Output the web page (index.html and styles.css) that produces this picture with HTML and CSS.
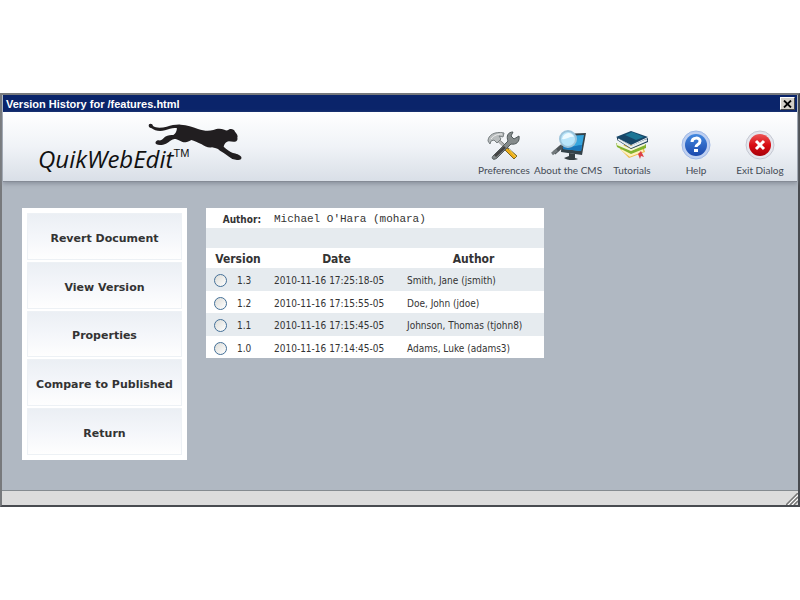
FILE: index.html
```html
<!DOCTYPE html>
<html lang="en">
<head>
<meta charset="utf-8">
<title>Version History for /features.html</title>
<link rel="stylesheet" href="styles.css">
</head>
<body>
<main class="window">
  <div class="titlebar">
    <h1 class="title">Version History for /features.html</h1>
    <button class="close" type="button" aria-label="Close">
      <svg width="9" height="8" viewBox="0 0 9 8"><path d="M1 .5 8 7.5M8 .5 1 7.5" stroke="#000" stroke-width="1.8"/></svg>
    </button>
  </div>
  <header class="header">
    <div class="brand">
      <span class="name">QuikWebEdit</span><span class="tm">TM</span>
      <svg class="panther" width="110" height="50" viewBox="0 0 330 150" aria-hidden="true">
        <path fill="#211e20" d="M27 19C32 15 38 18 39 24C48 31 65 30 80 26C95 22 109 19 122 20C142 20 157 27 174 33C191 39 207 40 220 36C233 31 243 32 253 35C258 38 264 38 268 34C274 31 283 34 285 41C290 47 295 53 292 59C294 64 291 70 285 71C275 73 267 67 260 72C254 76 252 81 251 86C260 95 270 101 279 105C288 107 300 110 304 117C306 124 301 127 291 126L277 123C263 113 252 105 240 98C232 90 224 91 216 88C204 90 195 86 185 79C173 74 163 68 154 66C147 70 139 73 131 73C122 71 115 63 103 63C93 64 87 73 78 77C68 81 57 83 48 78C44 73 49 67 56 67C63 68 66 65 72 59C79 52 89 50 100 51C107 48 110 39 111 31C99 28 88 34 75 37C59 41 43 38 35 31C28 30 24 25 27 19Z"/>
      </svg>
    </div>
    <nav class="tools">
      <a class="tool" href="#preferences">
        <svg width="34" height="32" viewBox="0 0 34 32" aria-hidden="true">
          <path d="M10 10 28 27" stroke="#666" stroke-width="3"/>
          <path d="M10 10 18 18" stroke="#b9bcbc" stroke-width="2"/>
          <path d="m19 18 11 9-3 3-10-10z" fill="#edad19" stroke="#77662b"/>
          <path d="m22 20 7 8" stroke="#ffdc54"/>
          <path d="M1 12c0-6 7-10 16-8l-1 4-4-1 2 3-4 4-3-3-3 1-1 3z" fill="#b9bdbe" stroke="#777e80"/>
          <path d="m6 27 15-15c-2-5 0-9 5-9l-2 4 3 3 5-3c1 6-3 9-8 8L10 29c-4 3-6 0-4-2z" fill="#858b8c" stroke="#50595a"/>
          <path d="m8 27 10-9" stroke="#444" stroke-width="3"/><path d="M4 10c3-4 7-5 11-5" fill="none" stroke="#eee"/>
        </svg>
        <span>Preferences</span>
      </a>
      <a class="tool" href="#about">
        <svg width="36" height="32" viewBox="0 0 36 32" aria-hidden="true">
          <path d="m12 5 24-1-4 22-21-3z" fill="#344249"/>
          <path d="m14 7 20-1-3 16-18-2z" fill="#36a5dd"/>
          <path d="m13 16c7 4 12 0 19 0l-1 6-18-2z" fill="#1976ba"/>
          <path d="m19 24 6 1v4l3 1c-4 2-12 1-14-1l5-2z" fill="#353e42"/>
          <path d="m12 17-8 7" stroke="#4c5357" stroke-width="4"/><path d="m7 21-5 4" stroke="#737a7d" stroke-width="3"/>
          <circle cx="18" cy="10" r="8" fill="#b9e5fa" stroke="#9cc3da" stroke-width="2"/>
          <path d="M12 10c2-7 9-8 12-2-4-1-8 3-12 2z" fill="#edfaff"/>
        </svg>
        <span>About the CMS</span>
      </a>
      <a class="tool" href="#tutorials">
        <svg width="34" height="32" viewBox="0 0 34 32" aria-hidden="true">
          <path d="m5 20 9 9 16-6-2-6-18-2z" fill="#edbb49"/><path d="m7 20 8 6 13-5" stroke="#fff0bd" stroke-width="3" fill="none"/>
          <path d="m26 22 3 6-3-1-1 3-2-5z" fill="#dc4146"/>
          <path d="m1 14 15 8 15-7v4l-15 6-14-7z" fill="#83b32e"/><path d="m2 15 14 6 14-6" fill="none" stroke="#f2f6d7" stroke-width="2"/>
          <path d="m2 8 14 9 17-8v4l-17 7-14-9z" fill="#183b58"/><path d="m3 10 13 8 16-7" fill="none" stroke="#e9eef0" stroke-width="2"/>
          <path d="m1 8 15-6 17 6-17 8z" fill="#174668"/><path d="m10 6 7-3 12 5-8 3z" fill="#1c7595"/>
        </svg>
        <span>Tutorials</span>
      </a>
      <a class="tool" href="#help">
        <svg width="32" height="32" viewBox="0 0 32 32" aria-hidden="true">
          <defs><linearGradient id="blue" x2="0" y2="1"><stop stop-color="#4388df"/><stop offset="1" stop-color="#1b48ac"/></linearGradient></defs>
          <circle cx="16" cy="16" r="14" fill="#bfd0f1" stroke="#a0b9e6"/><circle cx="16" cy="16" r="11" fill="url(#blue)"/>
          <path d="M12 13c0-5 8-5 8-1 0 4-4 3-4 6" fill="none" stroke="#fff" stroke-width="3"/><path d="M14 20h4v3h-4z" fill="#fff"/>
        </svg>
        <span>Help</span>
      </a>
      <a class="tool" href="#exit">
        <svg width="32" height="32" viewBox="0 0 32 32" aria-hidden="true">
          <defs><linearGradient id="red" x2="0" y2="1"><stop stop-color="#ed5555"/><stop offset=".5" stop-color="#d80d14"/><stop offset="1" stop-color="#a80009"/></linearGradient></defs>
          <circle cx="16" cy="16" r="14" fill="#e5e6ed" stroke="#c4c8d2"/><circle cx="16" cy="16" r="11" fill="url(#red)"/>
          <path d="m12 12 8 8m0-8-8 8" stroke="#fff" stroke-width="3"/>
        </svg>
        <span>Exit Dialog</span>
      </a>
    </nav>
  </header>
  <div class="content">
    <div class="actions">
      <button type="button">Revert Document</button>
      <button type="button">View Version</button>
      <button type="button">Properties</button>
      <button type="button">Compare to Published</button>
      <button type="button">Return</button>
    </div>
    <table class="versions">
      <colgroup><col class="col-version"><col class="col-date"><col class="col-author"></colgroup>
      <tbody>
        <tr class="meta"><th scope="row">Author:</th><td colspan="2">Michael O'Hara (mohara)</td></tr>
        <tr class="spacer"><td colspan="3"></td></tr>
        <tr class="heads"><th scope="col">Version</th><th scope="col">Date</th><th scope="col">Author</th></tr>
      </tbody>
      <tbody class="entries">
        <tr><td><label><input type="radio" name="version">1.3</label></td><td>2010-11-16 17:25:18-05</td><td>Smith, Jane (jsmith)</td></tr>
        <tr><td><label><input type="radio" name="version">1.2</label></td><td>2010-11-16 17:15:55-05</td><td>Doe, John (jdoe)</td></tr>
        <tr><td><label><input type="radio" name="version">1.1</label></td><td>2010-11-16 17:15:45-05</td><td>Johnson, Thomas (tjohn8)</td></tr>
        <tr><td><label><input type="radio" name="version">1.0</label></td><td>2010-11-16 17:14:45-05</td><td>Adams, Luke (adams3)</td></tr>
      </tbody>
    </table>
  </div>
  <footer class="status">
    <svg width="12" height="12" viewBox="0 0 12 12" aria-hidden="true"><path d="M0 12 12 0M4 12l8-8M8 12l4-4" stroke="#777" stroke-width="1.5"/><path d="m2 12 10-10M6 12l6-6" stroke="#fff"/></svg>
  </footer>
</main>
</body>
</html>
```
FILE: styles.css
```css
* { box-sizing: border-box; }
body {
  margin: 0;
  padding: 93px 0;
  background: #fff;
  color: #333;
  font: 10px "DejaVu Sans Condensed", "DejaVu Sans", sans-serif;
}
.window {
  display: flex;
  flex-direction: column;
  min-height: 414px;
  border: 2px solid #484b50;
  border-top-color: #77797c;
  border-left-color: #77797c;
  background: #b0b8c2;
}
.titlebar {
  display: flex;
  align-items: center;
  justify-content: space-between;
  height: 17px;
  margin: 0 1px;
  padding: 0 2px 0 3px;
  background: #0a246a;
}
.title {
  margin: 0;
  color: #fff;
  font: bold 11px/16px "Liberation Sans", sans-serif;
}
.close {
  display: grid;
  place-items: center;
  width: 15px;
  height: 13px;
  padding: 0;
  border: 1px solid;
  border-color: #fff #444 #444 #fff;
  background: #d4d0c8;
}
.header {
  display: flex;
  justify-content: space-between;
  height: 70px;
  margin: 0 1px;
  background: linear-gradient(#fff, #f0f3f7 50%, #d9dfe7);
  border-bottom: 1px solid #858b96;
  box-shadow: 0 2px 4px #8d949f;
}
.brand {
  position: relative;
  display: flex;
  align-items: flex-start;
  padding: 30px 0 0 35px;
  color: #111;
}
.name { font: italic 24px/34px "Open Sans", sans-serif; }
.tm { padding-top: 5px; font: 11px/12px "Liberation Sans", sans-serif; }
.panther { position: absolute; left: 137px; top: 6px; }
.tools { display: flex; padding: 17px 5px 0 0; }
.tool {
  display: flex;
  flex-direction: column;
  align-items: center;
  gap: 2px;
  width: 64px;
  color: #444b55;
  font: 10px/14px Lato, sans-serif;
  text-decoration: none;
  white-space: nowrap;
}
.content {
  flex: 1;
  display: flex;
  align-items: flex-start;
  gap: 19px;
  padding: 26px 20px 20px 20px;
}
.actions {
  display: grid;
  grid-auto-rows: 1fr;
  gap: 2px;
  width: 165px;
  min-height: 252px;
  padding: 5px;
  background: #fff;
}
.actions button {
  border: 1px solid #edf1f5;
  background: linear-gradient(#ebeff4, #f4f6fa 50%, #fefefe);
  color: #333;
  padding: 4px 0 0;
  font: bold 11px "DejaVu Sans", sans-serif;
}
.versions {
  width: 338px;
  border-collapse: collapse;
  table-layout: fixed;
  background: #fff;
}
.col-version { width: 64px; }
.col-date { width: 133px; }
.versions td { padding: 2px 4px 0; }
.versions th { padding: 2px 0 0; }
.meta, .spacer, .heads { height: 20px; }
.meta th { padding-right: 9px; text-align: right; font-size: 10px; }
.meta td { font: 11px "Liberation Mono", monospace; }
.heads th { font-size: 12px; }
.entries tr { height: 22px; }
.entries tr:nth-child(odd) { height: 23px; }
.spacer, .entries tr:nth-child(odd) { background: #e6ebef; }
.entries label { display: flex; align-items: center; gap: 10px; padding-left: 4px; }
.entries input {
  appearance: none;
  width: 13px;
  height: 13px;
  margin: 0;
  border: 1px solid #447098;
  border-radius: 50%;
  background: linear-gradient(135deg, #dcdcd7, #fff);
}
.status {
  display: flex;
  align-items: flex-end;
  justify-content: flex-end;
  height: 15px;
  border-top: 1px solid #858b90;
  background: #dcdcdc;
}
```
